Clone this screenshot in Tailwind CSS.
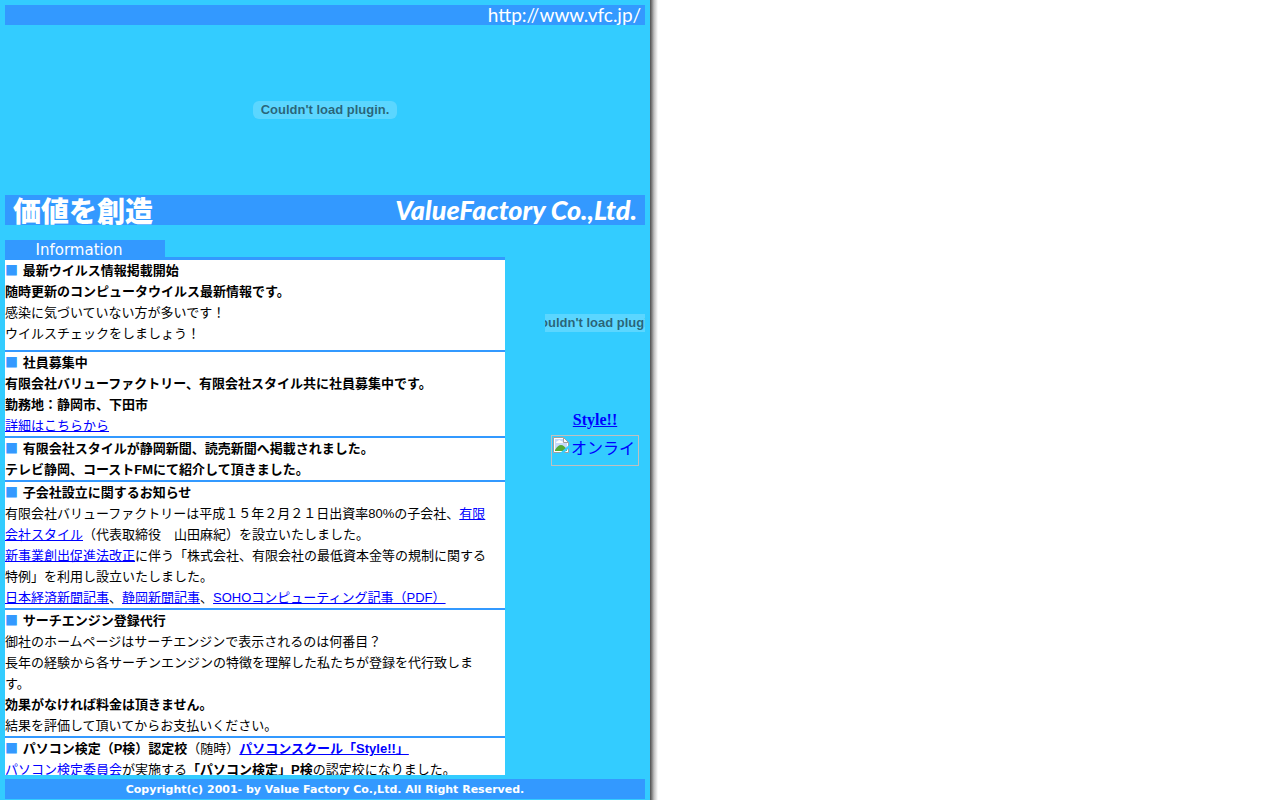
<!DOCTYPE html>
<html lang="ja">
<head>
    <meta charset="UTF-8">
    <meta name="viewport" content="width=device-width, initial-scale=1.0">
    <title>ValueFactory Co.,Ltd.</title>
    <script src="https://cdn.jsdelivr.net/npm/@tailwindcss/browser@4"></script>
</head>
<body class="bg-white font-['Liberation_Sans','Noto_Sans_CJK_JP',sans-serif] text-black">
    <div class="flex min-h-screen">
        <div class="w-full max-w-[650px] bg-[#33ccff] px-[5px] pt-[5px]">
            <!-- Header -->
            <header>
                <div class="flex h-5 items-center justify-end bg-[#3399ff] pr-1 font-['Lato',sans-serif] text-[19px] leading-5 text-white">http://www.vfc.jp/</div>
                <div class="flex h-[170px] items-center justify-center">
                    <span class="rounded-md bg-white/20 px-2 text-[13px] leading-[18px] font-bold text-black/55">Couldn't load plugin.</span>
                </div>
                <div class="flex h-[30px] items-center justify-between bg-[#3399ff] px-2 text-white">
                    <p class="font-['Noto_Sans_CJK_JP',sans-serif] text-[28px] leading-[28px] font-black">価値を創造</p>
                    <h1 class="font-['Lato',sans-serif] text-[27px] leading-[30px] font-black italic">ValueFactory Co.,Ltd.</h1>
                </div>
            </header>

            <div class="flex justify-between pt-[15px]">
                <!-- Information -->
                <main class="w-full max-w-[500px]">
                    <h2 class="h-[17px] w-40 bg-[#3399ff] pr-3 text-center font-['DejaVu_Sans',sans-serif] text-[15px] leading-5 text-white">Information</h2>
                    <div class="h-[518px] divide-y-2 divide-[#3399ff] overflow-hidden border-t-3 border-[#3399ff] bg-white text-[13px] leading-[21px]">
                        <section class="pr-2 pb-1.5">
                            <h3 class="font-bold"><span class="mr-px font-['Noto_Sans_CJK_JP',sans-serif] leading-none text-[#3399ff]">■</span> 最新ウイルス情報掲載開始</h3>
                            <p class="font-bold">随時更新のコンピュータウイルス最新情報です。</p>
                            <p>感染に気づいていない方が多いです！</p>
                            <p>ウイルスチェックをしましょう！</p>
                        </section>
                        <section class="pr-2">
                            <h3 class="font-bold"><span class="mr-px font-['Noto_Sans_CJK_JP',sans-serif] leading-none text-[#3399ff]">■</span> 社員募集中</h3>
                            <p class="font-bold">有限会社バリューファクトリー、有限会社スタイル共に社員募集中です。</p>
                            <p class="font-bold">勤務地：静岡市、下田市</p>
                            <p><a href="#" class="text-[#0000ff] underline">詳細はこちらから</a></p>
                        </section>
                        <section class="pr-2">
                            <h3 class="font-bold"><span class="mr-px font-['Noto_Sans_CJK_JP',sans-serif] leading-none text-[#3399ff]">■</span> 有限会社スタイルが静岡新聞、読売新聞へ掲載されました。</h3>
                            <p class="font-bold">テレビ静岡、コーストFMにて紹介して頂きました。</p>
                        </section>
                        <section class="pr-2">
                            <h3 class="font-bold"><span class="mr-px font-['Noto_Sans_CJK_JP',sans-serif] leading-none text-[#3399ff]">■</span> 子会社設立に関するお知らせ</h3>
                            <p>有限会社バリューファクトリーは平成１５年２月２１日出資率80%の子会社、<a href="#" class="text-[#0000ff] underline">有限会社スタイル</a>（代表取締役　山田麻紀）を設立いたしました。</p>
                            <p><a href="#" class="text-[#0000ff] underline">新事業創出促進法改正</a>に伴う「株式会社、有限会社の最低資本金等の規制に関する特例」を利用し設立いたしました。</p>
                            <p><a href="#" class="text-[#0000ff] underline">日本経済新聞記事</a>、<a href="#" class="text-[#0000ff] underline">静岡新聞記事</a>、<a href="#" class="text-[#0000ff] underline">SOHOコンピューティング記事（PDF）</a></p>
                        </section>
                        <section class="pr-2">
                            <h3 class="font-bold"><span class="mr-px font-['Noto_Sans_CJK_JP',sans-serif] leading-none text-[#3399ff]">■</span> サーチエンジン登録代行</h3>
                            <p>御社のホームページはサーチエンジンで表示されるのは何番目？</p>
                            <p>長年の経験から各サーチンエンジンの特徴を理解した私たちが登録を代行致します。</p>
                            <p class="font-bold">効果がなければ料金は頂きません。</p>
                            <p>結果を評価して頂いてからお支払いください。</p>
                        </section>
                        <section class="pr-2">
                            <h3><b><span class="mr-px font-['Noto_Sans_CJK_JP',sans-serif] leading-none text-[#3399ff]">■</span> パソコン検定（P検）認定校</b>（随時）<a href="#" class="font-bold text-[#0000ff] underline">パソコンスクール「Style!!」</a></h3>
                            <p><a href="#" class="text-[#0000ff] underline">パソコン検定委員会</a>が実施する<b>「パソコン検定」P検</b>の認定校になりました。</p>
                        </section>
                    </div>
                </main>

                <!-- Side links -->
                <aside class="flex w-[100px] shrink-0 flex-col items-center pt-[33px]">
                    <div class="flex h-[100px] w-full items-center justify-center overflow-hidden">
                        <span class="shrink-0 bg-white/20 px-2 text-[13px] leading-[18px] font-bold whitespace-nowrap text-black/55">Couldn't load plugin.</span>
                    </div>
                    <a href="#" class="mt-9 font-['Liberation_Serif',serif] text-[16px] leading-[22px] font-bold text-[#0000ff] underline">Style!!</a>
                    <a href="#" class="mt-1 flex h-[31px] w-[88px] border border-[#c0c0c0] pt-px pl-px text-[16px] leading-6 text-[#0000ff]">
                        <svg class="size-4 shrink-0" viewBox="0 0 16 16" aria-hidden="true">
                            <path d="M.5.5h10l5 5v10H.5z" fill="#fff" stroke="#a0a0a0"/>
                            <path d="M2 2h8v4h4v8H2z" fill="#c6d9fa"/>
                            <path d="M3 6q0-2 2-2 1-2 3 0 2 0 2 2z" fill="#fff"/>
                            <path d="M2 14v-1q3-5 6-5 3 0 6 5v1z" fill="#55aa33"/>
                            <path d="M16 8v3l-5 5H7z" fill="#33ccff"/>
                            <path d="M10.5 .5v5h5z" fill="#fff" stroke="#a0a0a0"/>
                        </svg>
                        <span class="ml-0.5 whitespace-nowrap">オンライ</span>
                    </a>
                </aside>
            </div>

            <!-- Footer -->
            <footer class="mt-1 mb-px h-5 bg-[#3399ff] text-center font-['DejaVu_Sans',sans-serif] text-[11px] leading-[22px] font-bold text-white">Copyright(c) 2001- by Value Factory Co.,Ltd. All Right Reserved.</footer>
        </div>
        <!-- Page edge shadow -->
        <div class="w-2 shrink-0 bg-linear-to-r from-[#4d4d4d] via-[#c0c0c0] to-white"></div>
    </div>
</body>
</html>
